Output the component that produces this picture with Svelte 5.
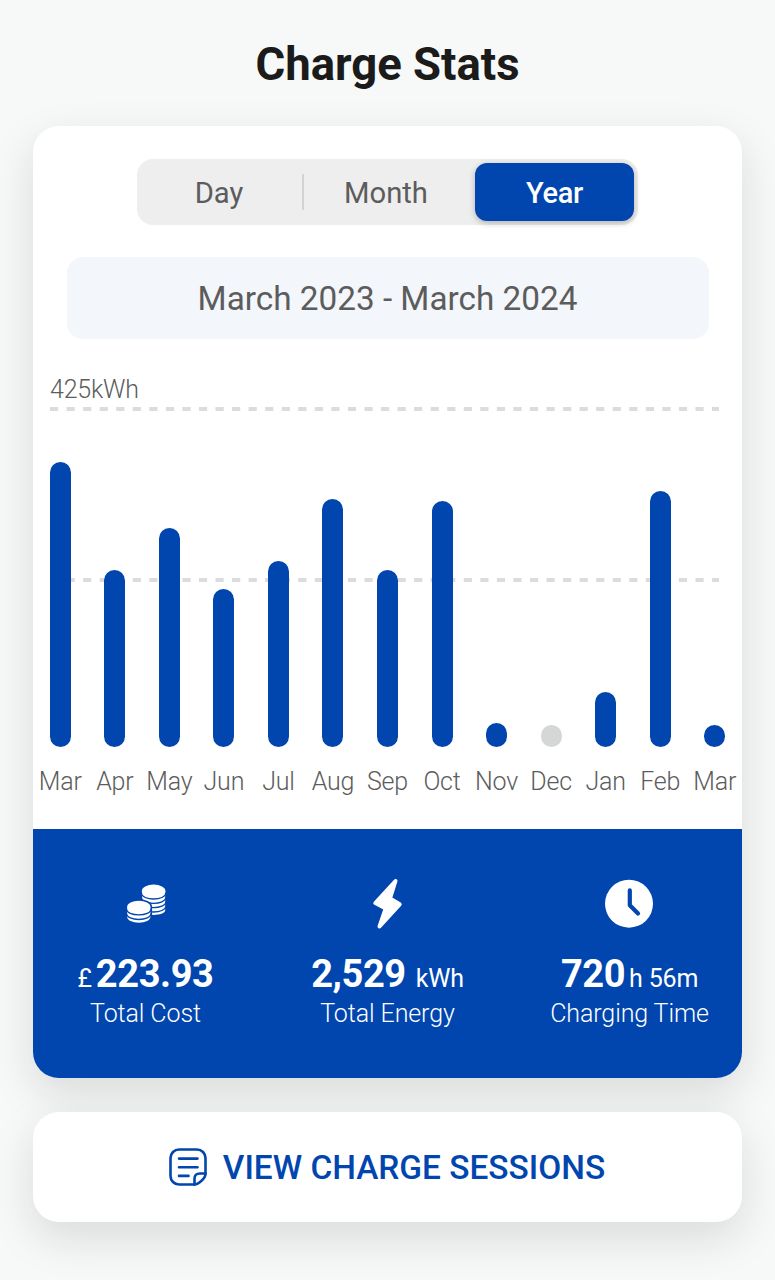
<script lang="ts">
  interface Bar {
    month: string;
    height: number;
    empty?: boolean;
  }

  const ranges = ['Day', 'Month', 'Year'];
  let selected = $state('Year');

  const bars: Bar[] = [
    { month: 'Mar', height: 285 },
    { month: 'Apr', height: 177 },
    { month: 'May', height: 219 },
    { month: 'Jun', height: 158 },
    { month: 'Jul', height: 186 },
    { month: 'Aug', height: 248 },
    { month: 'Sep', height: 177 },
    { month: 'Oct', height: 246 },
    { month: 'Nov', height: 24.5 },
    { month: 'Dec', height: 22, empty: true },
    { month: 'Jan', height: 55.5 },
    { month: 'Feb', height: 256 },
    { month: 'Mar', height: 22 },
  ];
</script>

<main>
  <h1>Charge Stats</h1>

  <section class="card">
    <div class="top">
      <div class="tabs">
        {#each ranges as range (range)}
          <button class:active={selected === range} onclick={() => (selected = range)}>
            {range}
          </button>
        {/each}
      </div>
      <div class="period">March 2023 - March 2024</div>
    </div>

    <div class="chart">
      <div class="max-label">425kWh</div>
      <div class="plot">
        <svg class="grid" width="709" height="340">
          <line x1="17" y1="2" x2="686" y2="2" />
          <line x1="17" y1="173" x2="686" y2="173" />
        </svg>
        <div class="bars">
          {#each bars as bar}
            <div class="bar" class:empty={bar.empty} style="height: {bar.height}px"></div>
          {/each}
        </div>
      </div>
      <div class="months">
        {#each bars as bar}
          <span>{bar.month}</span>
        {/each}
      </div>
    </div>

    <div class="totals">
      <div class="total">
        <svg class="icon" width="80" height="70" viewBox="0 0 80 70">
          <path fill="#fff" d="M32 26h23.200v19c0 6.500-23.200 6.500-23.200 0z" />
          <ellipse cx="43.600" cy="26" rx="11.800" ry="6.400" fill="#fff" />
          <g fill="none" stroke="#0046ae" stroke-width="1.300">
            <path d="M31.500 28c0 8 24.200 8 24.200 0" />
            <path d="M31.500 32.300c0 8 24.200 8 24.200 0" />
            <path d="M31.500 36.700c0 8 24.200 8 24.200 0" />
            <path d="M31.500 41c0 8 24.200 8 24.200 0" />
          </g>
          <path
            fill="#fff"
            stroke="#0046ae"
            stroke-width="1.600"
            d="M16.300 42c0-9.400 25-9.400 25 0v9.500c0 9.400-25 9.400-25 0z"
          />
          <g fill="none" stroke="#0046ae" stroke-width="1.400">
            <path d="M16.500 43.700c0 8.200 24.600 8.200 24.600 0" />
            <path d="M16.500 48.300c0 8.200 24.600 8.200 24.600 0" />
          </g>
        </svg>
        <div class="value"><small class="pound">£</small>223.93</div>
        <div class="name">Total Cost</div>
      </div>
      <div class="total">
        <svg class="icon" width="80" height="70" viewBox="0 0 80 70">
          <path
            fill="#fff"
            stroke="#fff"
            stroke-width="4"
            stroke-linejoin="round"
            d="M45.500 16 25.300 38l10.400 5.500L29.500 61.500 49.700 39.300 40 33.500z"
          />
        </svg>
        <div class="value">2,529<small class="kwh">kWh</small></div>
        <div class="name">Total Energy</div>
      </div>
      <div class="total">
        <svg class="icon" width="80" height="70" viewBox="0 0 80 70">
          <circle cx="39" cy="38.700" r="24" fill="#fff" />
          <path
            fill="none"
            stroke="#0046ae"
            stroke-width="4.200"
            stroke-linecap="round"
            stroke-linejoin="round"
            d="M39.800 25.400v14.800l8.200 8.200"
          />
        </svg>
        <div class="value">720<small class="hours">h 56m</small></div>
        <div class="name">Charging Time</div>
      </div>
    </div>
  </section>

  <button class="sessions">
    <svg
      width="40"
      height="40"
      viewBox="0 0 40 40"
      fill="none"
      stroke="#0046ae"
      stroke-width="2.600"
      stroke-linecap="round"
      stroke-linejoin="round"
    >
      <path d="M26.500 37.500H11A8.500 8.500 0 0 1 2.500 29V11A8.500 8.500 0 0 1 11 2.500h18A8.500 8.500 0 0 1 37.500 11v16c0 4-7 10.500-11 10.500z" />
      <path d="M26.500 37.500v-5.500c0-4 1.500-5.500 5.500-5.500h5.500" />
      <path d="M11 11.600h18.500M11 20.200h18.500M11 28.900h9.500" />
    </svg>
    <span>VIEW CHARGE SESSIONS</span>
  </button>
</main>

<style>
  :global(body) {
    margin: 0;
    background: #f7f9f9;
  }

  main {
    box-sizing: border-box;
    width: 775px;
    height: 1280px;
    padding: 0 33px;
    overflow: hidden;
    background: #f7f9f9;
    font-family: Roboto, sans-serif;
    color: #5c5c5c;
  }

  h1 {
    margin: 0;
    height: 126px;
    line-height: 129px;
    font-size: 45.5px;
    font-weight: 700;
    text-align: center;
    color: #1b1b1b;
  }

  button {
    font: inherit;
    border: none;
    padding: 0;
    cursor: pointer;
  }

  .card {
    height: 952px;
    border-radius: 26px;
    background: #fff;
    box-shadow: 0 16px 44px rgba(20, 26, 24, 0.13);
  }

  .top {
    display: flex;
    flex-direction: column;
    align-items: center;
    gap: 32px;
    padding-top: 33px;
  }

  .tabs {
    box-sizing: border-box;
    display: grid;
    grid-template-columns: 167px 167px 159px;
    width: 501px;
    height: 66px;
    padding: 4px;
    border-radius: 16px;
    background: #eee;
  }

  .tabs button {
    height: 58px;
    border-radius: 12px;
    background: none;
    color: #5c5c5c;
    font-size: 29.2px;
    line-height: 60px;
  }

  .tabs button:first-child {
    padding-right: 11px;
    border-radius: 0;
    background: linear-gradient(#d3d3d3, #d3d3d3) 161px center / 2px 36px no-repeat;
  }

  .tabs button:nth-child(2) {
    padding-right: 11px;
  }

  .tabs button.active {
    background: #0046ae;
    color: #fff;
    font-size: 29px;
    font-weight: 500;
    letter-spacing: -0.3px;
    box-shadow: 0 2px 6px rgba(0, 0, 0, 0.25);
  }

  .period {
    width: 642px;
    height: 82px;
    border-radius: 16px;
    background: #f3f6fa;
    font-size: 33.3px;
    line-height: 83px;
    text-align: center;
  }

  .chart {
    height: 490px;
  }

  .max-label {
    box-sizing: border-box;
    height: 68px;
    padding: 36px 0 0 17px;
    font-size: 25px;
    font-weight: 300;
    letter-spacing: -0.2px;
    line-height: 30px;
  }

  .plot {
    display: grid;
    height: 340px;
  }

  .grid,
  .bars {
    grid-area: 1 / 1;
  }

  .grid line {
    stroke: #dcdcdc;
    stroke-width: 4;
    stroke-dasharray: 8.2 8.350;
  }

  .bars,
  .months {
    display: grid;
    grid-template-columns: repeat(13, 1fr);
    justify-items: center;
  }

  .bars {
    align-items: end;
  }

  .bar {
    width: 21px;
    border-radius: 10.5px;
    background: #0046ae;
  }

  .bar.empty {
    background: #d5d6d6;
  }

  .months {
    padding-top: 20px;
    font-size: 25px;
    font-weight: 300;
    letter-spacing: -0.2px;
    line-height: 30px;
  }

  .totals {
    display: flex;
    justify-content: space-between;
    box-sizing: border-box;
    height: 249px;
    padding: 36px 31px 0;
    border-radius: 0 0 26px 26px;
    background: #0046ae;
    color: #fff;
  }

  .total {
    display: flex;
    flex-direction: column;
    align-items: center;
    width: 163px;
  }

  .icon {
    flex-shrink: 0;
  }

  .total:first-child .icon {
    margin-left: 8px;
  }

  .total:nth-child(2) .icon {
    margin-left: 4px;
  }

  .value {
    height: 62px;
    line-height: 78px;
    font-size: 38px;
    font-weight: 700;
    letter-spacing: -0.4px;
    white-space: nowrap;
  }

  .value small {
    font-size: 25px;
    font-weight: 400;
    letter-spacing: -0.2px;
  }

  .value .pound {
    margin-right: 4px;
  }

  .value .kwh {
    margin-left: 10px;
  }

  .value .hours {
    margin-left: 4px;
  }

  .name {
    font-size: 25px;
    font-weight: 300;
    letter-spacing: -0.1px;
    line-height: 34px;
    white-space: nowrap;
  }

  .sessions {
    display: flex;
    align-items: center;
    justify-content: center;
    gap: 15px;
    width: 709px;
    height: 110px;
    margin-top: 34px;
    padding-right: 2px;
    border-radius: 26px;
    background: #fff;
    box-shadow: 0 16px 44px rgba(20, 26, 24, 0.13);
    color: #0046ae;
    font-size: 33.4px;
    font-weight: 500;
  }
</style>
